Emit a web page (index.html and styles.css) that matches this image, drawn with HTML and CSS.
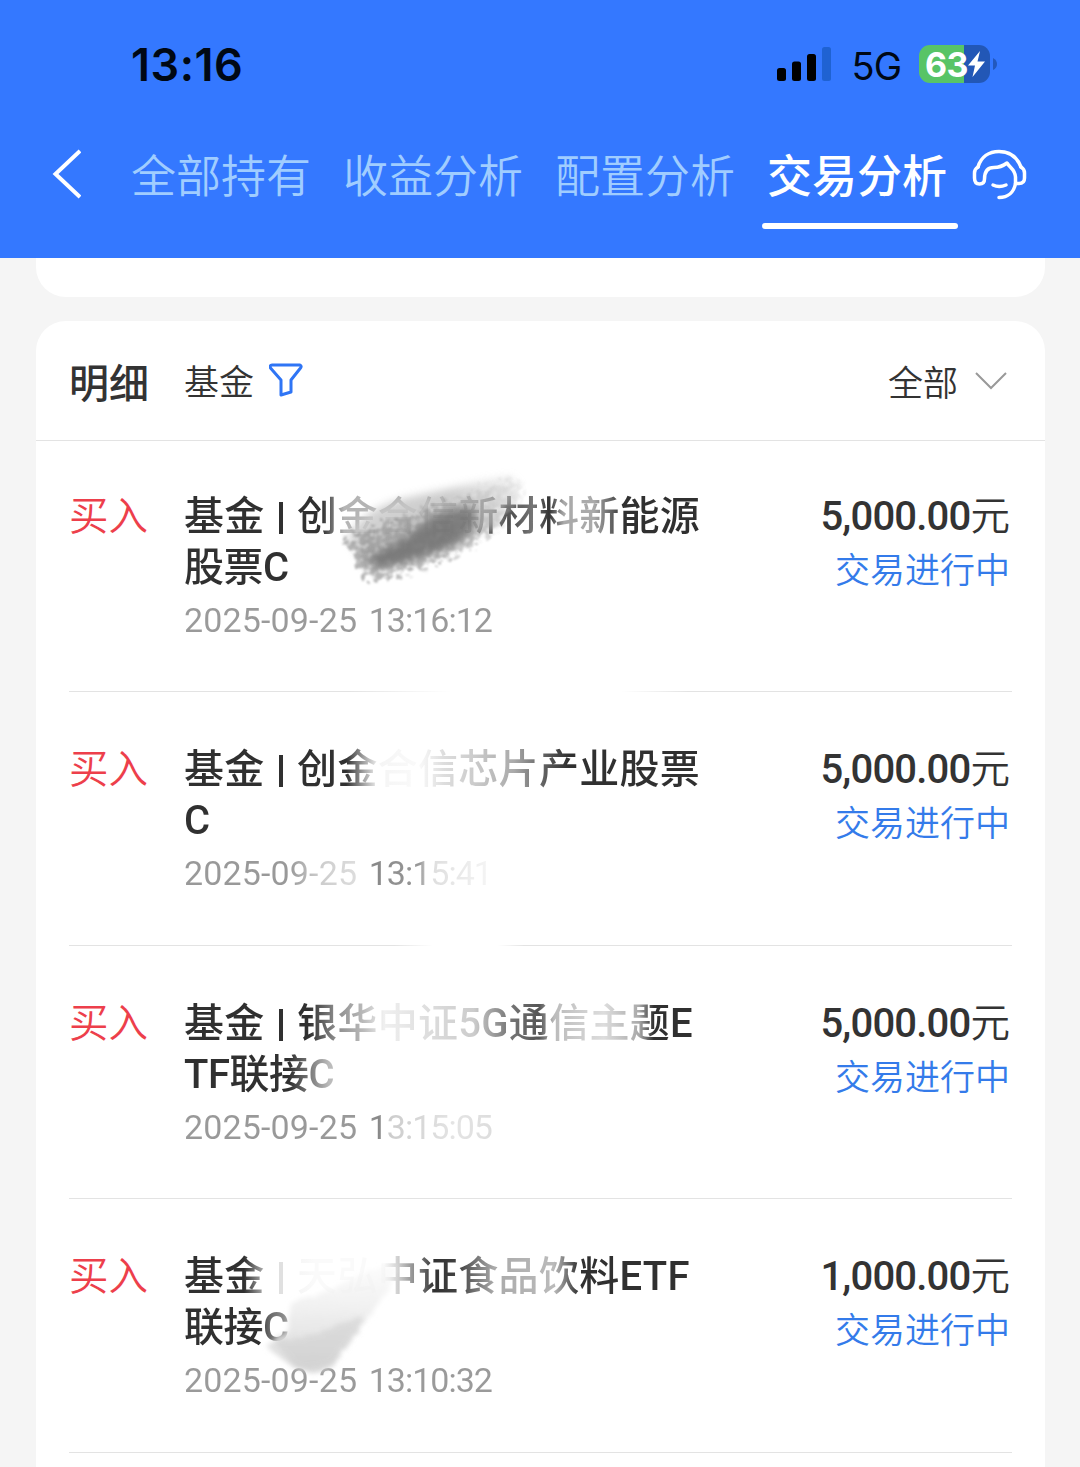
FILE: index.html
```html
<!DOCTYPE html>
<html lang="zh-CN">
<head>
<meta charset="utf-8">
<title>交易分析</title>
<link rel="stylesheet" href="styles.css">
</head>
<body>
<header>
    <div class="status">
        <span class="clock">13:16</span>
        <svg class="signal" width="56" height="36" viewBox="0 0 56 36">
            <rect x="1" y="22" width="9" height="13" rx="2.5"/>
            <rect x="16" y="15.500" width="9" height="19.500" rx="2.5"/>
            <rect x="31" y="8" width="9" height="27" rx="2.5"/>
            <rect x="46" y="1" width="9" height="34" rx="2.5" fill="#1f62d2"/>
        </svg>
        <span class="network">5G</span>
        <div class="battery">
            <span>63</span>
            <svg width="17" height="26" viewBox="0 0 17 26"><path d="M12 0L0 14.500h7L4.500 26L17 10.500H9.500z" fill="#fff"/></svg>
        </div>
        <svg class="nub" width="4" height="12" viewBox="0 0 4 12"><path d="M0 0q4 2 4 6t-4 6z" fill="#2258bd"/></svg>
    </div>
    <nav>
        <svg class="back" width="30" height="50" viewBox="0 0 30 50"><path d="M29 2L4.500 25L29 48" fill="none" stroke="#fff" stroke-width="4"/></svg>
        <a class="tab">全部持有</a>
        <a class="tab">收益分析</a>
        <a class="tab">配置分析</a>
        <a class="tab active">交易分析</a>
        <svg class="service" width="56" height="52" viewBox="0 0 56 52" fill="none" stroke="#fff" stroke-width="3.500" stroke-linecap="round" stroke-linejoin="round">
            <path d="M6 18C9 8 17 2.500 27 2.500S45 8 49 18"/>
            <path d="M6 18Q2.500 20 2.500 24V29Q2.500 35 7.500 35T12.500 30C12.500 22 16 18.500 22 18.500C28 18.500 31 17 35 14C38 19 43 20 43.500 28V34.500H47Q52.500 34.500 52.500 29V24Q52.500 20 49 18"/>
            <path d="M43.500 34.500C42 43 36 48.500 27 48.500"/>
            <path d="M21 36Q27 39 34 36"/>
        </svg>
    </nav>
</header>
<main>
    <div class="card previous"></div>
    <section class="card list">
        <div class="head">
            <h2>明细</h2>
            <span class="kind">基金</span>
            <svg class="funnel" width="34" height="34" viewBox="0 0 34 34"><path d="M3 2h28q2 1 0.500 3L22 17v12l-10 3V17L1.500 5Q0.500 2 3 2z" fill="none" stroke="#2f75f5" stroke-width="3" stroke-linejoin="round"/></svg>
            <span class="range">全部</span>
            <svg width="32" height="20" viewBox="0 0 32 20"><path d="M1 2L16 17L31 2" fill="none" stroke="#999" stroke-width="2"/></svg>
        </div>
        <div class="row fade-a">
            <div class="side">买入</div>
            <div class="fund">
                <div class="name"><span class="first">基金 <i></i> 创金合信新材料新能源</span><span class="second">股票C</span></div>
                <time>2025-09-25 <em>13:16:12</em></time>
            </div>
            <div class="amount"><b>5,000.00</b>元<p>交易进行中</p></div>
            <svg class="smudge smudge-a" width="210" height="130" viewBox="0 0 210 130">
                <defs>
                    <filter id="rough" x="-20%" y="-20%" width="140%" height="140%">
                        <feTurbulence type="fractalNoise" baseFrequency="0.16" numOctaves="3" seed="4" result="n"/>
                        <feDisplacementMap in="SourceGraphic" in2="n" scale="30" xChannelSelector="R" yChannelSelector="G" result="d"/>
                        <feColorMatrix in="n" type="matrix" values="0 0 0 0 0  0 0 0 0 0  0 0 0 0 0  3 0 0 0 -0.600" result="grain"/>
                        <feComposite in="d" in2="grain" operator="in"/>
                        <feGaussianBlur stdDeviation="1.200"/>
                    </filter>
                    <filter id="soft" x="-20%" y="-20%" width="140%" height="140%"><feGaussianBlur stdDeviation="4"/></filter>
                    <linearGradient id="ga" x1="0" y1="1" x2="1" y2="0">
                        <stop offset="0" stop-color="#777"/>
                        <stop offset="0.550" stop-color="#888"/>
                        <stop offset="1" stop-color="#ccc" stop-opacity="0.400"/>
                    </linearGradient>
                    <linearGradient id="gb" x1="0" y1="0" x2="1" y2="0">
                        <stop offset="0" stop-color="#ccc"/>
                        <stop offset="0.600" stop-color="#c4c4c4"/>
                        <stop offset="1" stop-color="#ddd" stop-opacity="0.500"/>
                    </linearGradient>
                </defs>
                <path d="M18 76Q30 48 75 36L180 14L190 24L165 64L105 94L38 108z" fill="url(#gb)" opacity="0.850" filter="url(#soft)"/>
                <path d="M14 80Q40 66 85 52L188 16L196 34L164 70L116 98L40 120z" fill="url(#ga)" opacity="0.550" filter="url(#rough)"/>
                <path d="M38 96Q70 80 94 62Q118 44 142 46Q154 62 124 82Q80 101 46 106z" fill="#707070" opacity="0.800" filter="url(#soft)"/>
            </svg>
        </div>
        <div class="row fade-b">
            <div class="side">买入</div>
            <div class="fund">
                <div class="name"><span class="first">基金 <i></i> 创金合信芯片产业股票</span><span class="second">C</span></div>
                <time>2025-09-25 <em>13:15:41</em></time>
            </div>
            <div class="amount"><b>5,000.00</b>元<p>交易进行中</p></div>
        </div>
        <div class="row fade-c">
            <div class="side">买入</div>
            <div class="fund">
                <div class="name"><span class="first">基金 <i></i> 银华中证5G通信主题E</span><span class="second">TF联接C</span></div>
                <time>2025-09-25 <em>13:15:05</em></time>
            </div>
            <div class="amount"><b>5,000.00</b>元<p>交易进行中</p></div>
        </div>
        <div class="row fade-d">
            <div class="side">买入</div>
            <div class="fund">
                <div class="name"><span class="first">基金 <i></i> 天弘中证食品饮料ETF</span><span class="second">联接C</span></div>
                <time>2025-09-25 <em>13:10:32</em></time>
            </div>
            <div class="amount"><b>1,000.00</b>元<p>交易进行中</p></div>
            <svg class="smudge smudge-d" width="160" height="160" viewBox="0 0 160 160">
                <defs>
                    <filter id="edge" x="-20%" y="-20%" width="140%" height="140%">
                        <feTurbulence type="fractalNoise" baseFrequency="0.150" numOctaves="2" seed="8" result="n"/>
                        <feDisplacementMap in="SourceGraphic" in2="n" scale="6"/>
                        <feGaussianBlur stdDeviation="2.500"/>
                    </filter>
                    <linearGradient id="gd" x1="0" y1="0" x2="0" y2="1">
                        <stop offset="0" stop-color="#f2f2f2" stop-opacity="0.300"/>
                        <stop offset="0.500" stop-color="#e8e8e8" stop-opacity="0.800"/>
                        <stop offset="1" stop-color="#d4d4d4" stop-opacity="0.900"/>
                    </linearGradient>
                </defs>
                <path d="M34 74Q78 62 108 42L142 36L132 60L76 136Q58 148 36 138L12 120Q14 106 30 104z" fill="url(#gd)" filter="url(#edge)"/>
                <path d="M16 112Q58 110 104 86Q108 92 98 106L76 132Q56 144 38 136z" fill="#ccc" opacity="0.500" filter="url(#edge)"/>
            </svg>
        </div>
    </section>
</main>
</body>
</html>
```
FILE: styles.css
```css
* {
    box-sizing: border-box;
}

body {
    margin: 0;
    height: 1467px;
    overflow: hidden;
    background: #f5f5f5;
    color: #333;
    font-family: Roboto, "Noto Sans CJK SC", sans-serif;
}

header {
    height: 258px;
    background: #3478ff;
}

.status {
    display: flex;
    align-items: center;
    height: 128px;
    padding: 0 83px 0 131px;
    color: #000814;
    font-family: Inter, sans-serif;
}

.clock {
    margin: 1px auto 0 0;
    font-size: 45px;
    font-weight: 600;
    letter-spacing: 0.5px;
}

.signal {
    margin-right: 20px;
}

.network {
    margin: 3px 18px 0 0;
    font-size: 38px;
    letter-spacing: -1px;
}

.battery {
    display: flex;
    align-items: center;
    width: 71px;
    height: 38px;
    padding-left: 6px;
    border-radius: 11px;
    background: linear-gradient(to right, #58c466 45px, #2257b6 45px);
    color: #fff;
    font-size: 34px;
    font-weight: 700;
    letter-spacing: -0.5px;
}

.nub {
    margin-left: 3px;
}

nav {
    display: flex;
    align-items: flex-start;
    height: 130px;
    padding: 2px 0 0 51px;
}

.back {
    margin: 19px 45px 0 0;
}

.tab {
    width: 196px;
    margin-right: 16px;
    padding: 3px 0 0 5px;
    font-size: 45px;
    font-weight: 350;
    line-height: 90px;
    white-space: nowrap;
    color: #a0cdff;
}

.tab.active {
    margin-right: 14px;
    color: #fff;
    font-weight: 500;
}

.tab.active::after {
    content: '';
    display: block;
    width: 196px;
    height: 6px;
    margin: 0 0 0 -5px;
    border-radius: 3px;
    background: #fff;
}

.service {
    margin-top: 19px;
}

main {
    padding: 0 35px 0 36px;
}

.card {
    border-radius: 30px;
    background: #fff;
}

.previous {
    height: 39px;
    margin-bottom: 24px;
    border-radius: 0 0 30px 30px;
}

.list {
    padding-bottom: 60px;
}

.head {
    display: flex;
    align-items: center;
    height: 120px;
    padding: 0 38px 0 33px;
    border-bottom: 1px solid #e3e3e3;
}

h2 {
    margin: 1px 35px 0 0;
    font-size: 40px;
    font-weight: 500;
}

.kind, .range {
    font-size: 35px;
    font-weight: 350;
}

.kind {
    margin: -3px 15px 0 0;
}

.funnel {
    margin-top: -2px;
}

.range {
    margin: 0 17px 0 auto;
}

.row {
    position: relative;
    display: flex;
    height: 253.5px;
    margin: 0 33px;
    padding-top: 52px;
    border-bottom: 1px solid #e3e3e3;
    line-height: 51px;
}

.head + .row {
    height: 251px;
    padding-top: 50px;
}

.side {
    width: 115px;
    font-size: 39.5px;
    font-weight: 350;
    color: #ed3f4b;
}

.fund {
    flex: 1;
}

.name {
    font-size: 40px;
    font-weight: 500;
}

.name span {
    display: block;
    width: 530px;
    height: 51px;
    white-space: nowrap;
    color: transparent;
    background-image: linear-gradient(#303030, #303030);
    -webkit-background-clip: text;
    background-clip: text;
}

.first {
    letter-spacing: 0.3px;
}

.second {
    letter-spacing: -0.5px;
}

.name i {
    display: inline-block;
    width: 4px;
    height: 32px;
    margin: 0 4px;
    vertical-align: -4px;
    background: #303030;
}

time {
    display: block;
    width: 330px;
    font-size: 34px;
    letter-spacing: 0.15px;
    word-spacing: 3px;
    line-height: 54px;
    color: transparent;
    background-image: linear-gradient(#9a9a9a, #9a9a9a);
    -webkit-background-clip: text;
    background-clip: text;
}

time em {
    font-style: normal;
    letter-spacing: -1px;
}

.amount {
    padding-right: 2px;
    text-align: right;
    font-size: 39.5px;
    font-weight: 350;
}

.amount b {
    font-size: 40px;
    font-weight: 500;
    letter-spacing: -0.8px;
}

.amount p {
    margin: 0;
    font-size: 35px;
    line-height: 60px;
    color: #347bea;
}

/* worn-out stretches of the names and times */
.fade-a .first {
    background-image: linear-gradient(to right, #303030 138px, #b5b5b5 160px, #b0b0b0 230px, #777 250px, #444 320px, #777 350px, #333 365px, #aaa 380px, #aaa 410px, #303030 440px);
}

.fade-b .first {
    background-image: linear-gradient(to right, #303030 162px, #aaa 181px, #f5f5f5 195px, #fafafa 235px, #ddd 260px, #ccc 290px, #aaa 330px, #555 365px, #303030 385px);
}

.fade-b time {
    background-image: linear-gradient(to right, #999 105px, #ccc 135px, #ddd 172px, #888 190px, #999 236px, #ddd 245px, #f5f5f5 305px);
}

.fade-c .first {
    background-image: linear-gradient(to right, #303030 125px, #888 150px, #bbb 180px, #f0f0f0 200px, #ddd 245px, #ccc 290px, #777 325px, #555 355px, #bbb 370px, #ddd 420px, #aaa 455px, #303030 470px);
}

.fade-c .second {
    background-image: linear-gradient(to right, #303030 105px, #777 125px, #bbb 145px);
}

.fade-c time {
    background-image: linear-gradient(to right, #999 175px, #888 195px, #ccc 205px, #e4e4e4 270px, #ddd 310px);
}

.fade-d .first {
    background-image: linear-gradient(to right, #303030 60px, #bbb 82px, #f4f4f4 110px, #fafafa 130px, #fafafa 200px, #ccc 215px, #666 240px, #303030 250px, #444 275px, #aaa 310px, #bbb 370px, #303030 395px);
}

.fade-d .name i {
    background: #e0e0e0;
}

.fade-d .second {
    background-image: linear-gradient(to right, #303030 75px, #666 85px, #999 105px);
}

.smudge {
    position: absolute;
}

.smudge-a {
    left: 261px;
    top: 21px;
}

.smudge-d {
    left: 188px;
    top: 30px;
}

.fade-a::after, .fade-b::after {
    content: '';
    position: absolute;
    bottom: -1px;
    height: 1px;
    background: linear-gradient(to right, transparent, #fff 30%, #fff 80%, transparent);
}

.fade-a::after {
    left: 280px;
    width: 340px;
}

.fade-b::after {
    left: 325px;
    width: 130px;
}
```
